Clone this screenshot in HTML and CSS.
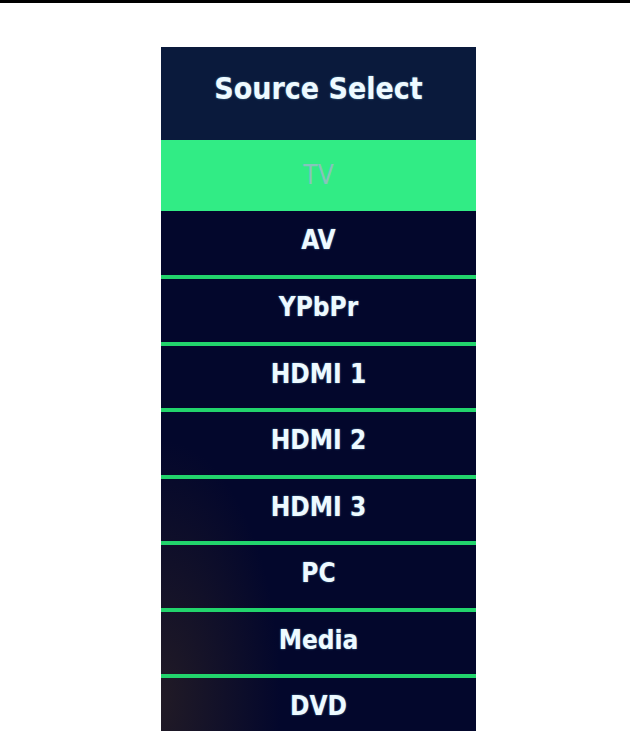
FILE: index.html
```html
<!DOCTYPE html>
<html lang="en">
<head>
<meta charset="utf-8">
<title>Source Select</title>
<link rel="stylesheet" href="styles.css">
</head>
<body>
<div class="topbar"></div>
<main class="panel">
  <h1 class="title">Source Select</h1>
  <ul class="list">
    <li class="item selected">TV</li>
    <li class="item first">AV</li>
    <li class="item">YPbPr</li>
    <li class="item">HDMI 1</li>
    <li class="item">HDMI 2</li>
    <li class="item">HDMI 3</li>
    <li class="item">PC</li>
    <li class="item">Media</li>
    <li class="item">DVD</li>
  </ul>
</main>
</body>
</html>
```
FILE: styles.css
```css
html, body {
  margin: 0;
  padding: 0;
  background: #ffffff;
  height: 731px;
  overflow: hidden;
}
.topbar {
  height: 3px;
  background: #000000;
}
.panel {
  margin: 44px 0 0 161px;
  width: 315px;
  height: 684px;
  background: #04082a;
  font-family: "DejaVu Sans Condensed", "DejaVu Sans", sans-serif;
  font-stretch: condensed;
  font-weight: bold;
  color: #eefaff;
  overflow: hidden;
}
.title {
  margin: 0;
  height: 93px;
  box-sizing: border-box;
  padding-top: 25px;
  background: #0a1a3c;
  font-size: 30px;
  line-height: 34px;
  text-align: center;
  font-weight: bold;
  text-shadow: 0 0 2px rgba(140, 220, 255, 0.6);
}
.list {
  list-style: none;
  margin: 0;
  padding: 0;
  background:
    radial-gradient(ellipse 120px 260px at 0 560px, rgba(70, 50, 30, 0.45), rgba(70, 50, 30, 0) 100%),
    #03072c;
}
.item {
  height: 62.5px;
  border-top: 4px solid #22d46c;
  font-size: 26px;
  line-height: 56px;
  text-align: center;
  text-shadow: 0 0 2px rgba(140, 220, 255, 0.6);
}
.item.first {
  border-top: none;
  height: 64px;
  line-height: 58px;
}
.item.selected {
  height: 71px;
  border-top: none;
  line-height: 70px;
  background: #31ec85;
  color: #86c4bc;
  font-weight: normal;
  text-shadow: none;
}
```
